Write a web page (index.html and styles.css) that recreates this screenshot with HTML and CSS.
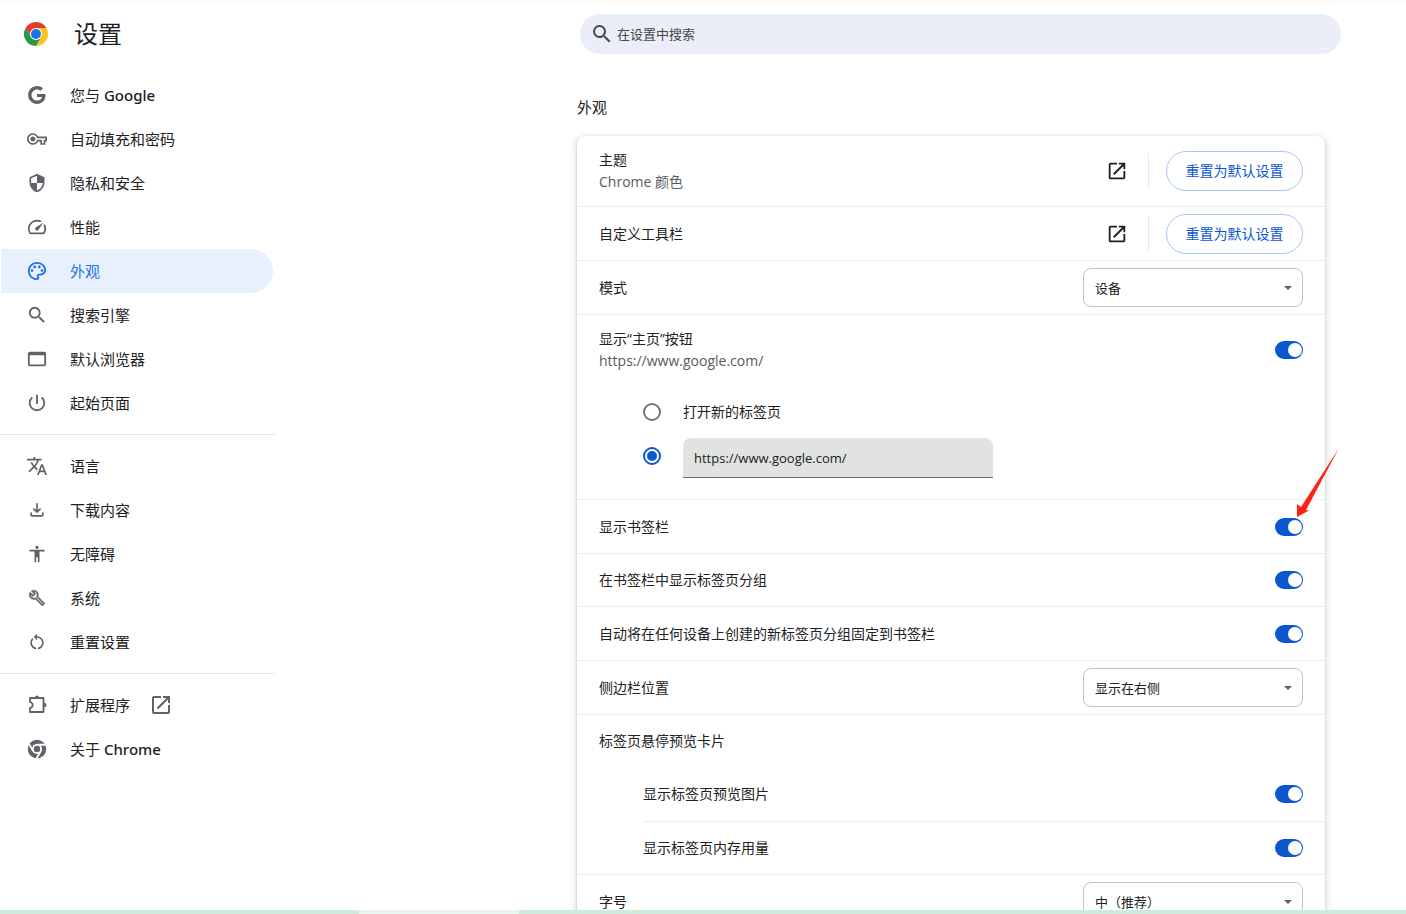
FILE: index.html
```html
<!DOCTYPE html>
<html lang="zh-CN">
<head>
<meta charset="utf-8">
<title>设置</title>
<link rel="stylesheet" href="styles.css">
</head>
<body>
<svg class="defs" aria-hidden="true">
  <symbol id="open" viewBox="0 0 24 24"><path d="M19 19H5V5h7V3H5a2 2 0 0 0-2 2v14a2 2 0 0 0 2 2h14c1.100 0 2-.9 2-2v-7h-2v7zM14 3v2h3.590l-9.830 9.830 1.410 1.410L19 6.410V10h2V3h-7z"/></symbol>
  <symbol id="search" viewBox="1 1 22 22"><path d="M15.500 14h-.79l-.28-.27A6.471 6.471 0 0 0 16 9.500 6.500 6.500 0 1 0 9.500 16c1.610 0 3.090-.59 4.230-1.570l.27.28v.79l5 4.990L20.490 19l-4.990-5zm-6 0C7.010 14 5 11.990 5 9.500S7.010 5 9.500 5 14 7.010 14 9.500 11.990 14 9.500 14z"/></symbol>
</svg>
<div class="strip-top"></div>
<div class="page">
  <header class="header">
    <div class="brand">
      <svg class="logo" viewBox="0 0 24 24" aria-hidden="true">
        <path fill="#e33b2e" d="M12 12V6h10.400A12 12 0 0 0 1.600 6L6.800 15z"/>
        <path fill="#fcc31e" d="M12 6h10.400A12 12 0 0 1 12 24l5.200-9z"/>
        <path fill="#279847" d="M12 24A12 12 0 0 1 1.600 6l5.200 9h10.400z"/>
        <circle cx="12" cy="12" r="6" fill="#fff"/>
        <circle cx="12" cy="12" r="5" fill="#1a73e8"/>
      </svg>
      <h1 class="title">设置</h1>
    </div>
    <label class="search">
      <svg class="icon22" aria-hidden="true"><use href="#search"/></svg>
      <input type="search" placeholder="在设置中搜索" aria-label="在设置中搜索">
    </label>
  </header>
  <div class="body">
    <nav class="nav" aria-label="设置">
      <a href="#google"><svg viewBox="0 0 18 18"><path d="M16.580 8H9v2.750h4.470c-.24 1.200-1.420 3.270-4.470 3.270-2.720 0-4.930-2.250-4.930-5.020S6.280 3.980 9 3.980c1.540 0 2.570.66 3.170 1.220l2.190-2.120C12.970 1.790 11.160 1 9 1 4.580 1 1 4.580 1 9s3.580 8 8 8c4.620 0 7.680-3.250 7.680-7.820 0-.46-.04-.83-.1-1.180z"/></svg><span>您与 <b>Google</b></span></a>
      <a href="#autofill"><svg viewBox="0 0 24 24"><path d="M22 19h-6v-4h-2.680c-1.140 2.420-3.600 4-6.320 4-3.860 0-7-3.140-7-7s3.140-7 7-7c2.720 0 5.170 1.580 6.320 4H24v6h-2v4zm-4-2h2v-4h2v-2H11.940l-.23-.67C11.010 8.340 9.110 7 7 7c-2.760 0-5 2.240-5 5s2.240 5 5 5c2.110 0 4.010-1.340 4.710-3.330l.23-.67H18v4zM7 15c-1.650 0-3-1.350-3-3s1.350-3 3-3 3 1.350 3 3-1.350 3-3 3z"/></svg><span>自动填充和密码</span></a>
      <a href="#privacy"><svg viewBox="0 0 24 24"><path d="M12 1L3 5v6c0 5.550 3.840 10.740 9 12 5.160-1.260 9-6.450 9-12V5l-9-4zm0 10.990h7c-.53 4.120-3.280 7.790-7 8.940V12H5V6.300l7-3.110v8.800z"/></svg><span>隐私和安全</span></a>
      <a href="#performance"><svg viewBox="1 1 22 22"><path d="M20.380 8.570l-1.230 1.850a8 8 0 0 1-.22 7.580H5.070A8 8 0 0 1 15.580 6.850l1.850-1.230A10 10 0 0 0 3.350 19a2 2 0 0 0 1.720 1h13.850a2 2 0 0 0 1.740-1 10 10 0 0 0-.27-10.440zm-9.790 6.840a2 2 0 0 0 2.830 0l5.660-8.490-8.490 5.660a2 2 0 0 0 0 2.830z"/></svg><span>性能</span></a>
      <a href="#appearance" class="active" aria-current="page"><svg viewBox="1 1 22 22"><path d="M12 22C6.490 22 2 17.510 2 12S6.490 2 12 2s10 4.040 10 9c0 3.310-2.690 6-6 6h-1.770c-.28 0-.5.22-.5.5 0 .12.05.23.13.33.41.47.64 1.060.64 1.670A2.500 2.500 0 0 1 12 22zm0-18c-4.410 0-8 3.590-8 8s3.590 8 8 8c.28 0 .5-.22.5-.5a.54.54 0 0 0-.14-.35c-.41-.46-.63-1.050-.63-1.650a2.500 2.500 0 0 1 2.500-2.500H16c2.210 0 4-1.790 4-4 0-3.860-3.590-7-8-7z"/><circle cx="6.500" cy="11.500" r="1.500"/><circle cx="9.500" cy="7.500" r="1.500"/><circle cx="14.500" cy="7.500" r="1.500"/><circle cx="17.500" cy="11.500" r="1.500"/></svg><span>外观</span></a>
      <a href="#engine"><svg><use href="#search"/></svg><span>搜索引擎</span></a>
      <a href="#browser"><svg viewBox="1 1 22 22"><path d="M20 4H4a2 2 0 0 0-2 2v12a2 2 0 0 0 2 2h16a2 2 0 0 0 2-2V6a2 2 0 0 0-2-2zm0 14H4V8h16v10z"/></svg><span>默认浏览器</span></a>
      <a href="#startup"><svg viewBox="1 1 22 22"><path d="M13 3h-2v10h2V3zm4.830 2.170l-1.420 1.420A6.920 6.920 0 0 1 19 12c0 3.870-3.130 7-7 7s-7-3.130-7-7c0-2.190 1.010-4.140 2.580-5.420L6.170 5.170A8.930 8.930 0 0 0 3 12a9 9 0 0 0 18 0c0-2.740-1.230-5.180-3.170-6.830z"/></svg><span>起始页面</span></a>
      <hr>
      <a href="#languages"><svg viewBox="1 1 22 22"><path d="M12.870 15.070l-2.540-2.510.03-.03c1.740-1.940 2.980-4.170 3.710-6.530H17V4h-7V2H8v2H1v1.990h11.170C11.500 7.920 10.440 9.750 9 11.350 8.070 10.320 7.300 9.190 6.690 8h-2c.73 1.630 1.730 3.170 2.980 4.560l-5.090 5.020L4 19l5-5 3.110 3.110.76-2.040zM18.500 10h-2L12 22h2l1.120-3h4.750L21 22h2l-4.500-12zm-2.620 7l1.620-4.330L19.120 17h-3.240z"/></svg><span>语言</span></a>
      <a href="#downloads"><svg viewBox="0 0 24 24"><path d="M12 16l-5-5 1.400-1.450 2.600 2.600V4h2v8.150l2.600-2.600L17 11zM6 20a2 2 0 0 1-2-2v-3h2v3h12v-3h2v3a2 2 0 0 1-2 2z"/></svg><span>下载内容</span></a>
      <a href="#accessibility"><svg viewBox="0 0 24 24"><path d="M12 2a2 2 0 1 1 0 4 2 2 0 0 1 0-4zm9 7h-6v13h-2v-6h-2v6H9V9H3V7h18v2z"/></svg><span>无障碍</span></a>
      <a href="#system"><svg viewBox="-2 -2 28 28"><path stroke="currentColor" stroke-width=".5" d="M22.610 18.990l-9.080-9.080c.93-2.340.45-5.100-1.440-7C9.790.61 6.210.4 3.660 2.260L7.500 6.110 6.080 7.520 2.250 3.690C.39 6.230.6 9.820 2.900 12.110c1.860 1.860 4.570 2.350 6.890 1.480l9.110 9.110c.39.39 1.020.39 1.410 0l2.300-2.300c.4-.38.4-1.010 0-1.410zm-3 1.600l-9.460-9.460c-.61.45-1.290.72-2 .82-1.360.2-2.790-.21-3.830-1.250C3.370 9.760 2.930 8.500 3 7.260l3.090 3.090 4.240-4.240-3.090-3.090c1.240-.07 2.490.37 3.440 1.310 1.080 1.080 1.490 2.570 1.240 3.960-.12.71-.42 1.370-.88 1.960l9.450 9.450-.88.89z"/></svg><span>系统</span></a>
      <a href="#reset"><svg viewBox="0 0 24 24"><path d="M12 5V2L8 6l4 4V7c3.310 0 6 2.690 6 6 0 2.970-2.170 5.430-5 5.910v2.020c3.950-.49 7-3.850 7-7.930 0-4.420-3.580-8-8-8zm-6 8c0-1.650.67-3.150 1.760-4.240L6.340 7.340A7.950 7.950 0 0 0 4 13c0 4.080 3.050 7.440 7 7.930v-2.020c-2.830-.48-5-2.940-5-5.910z"/></svg><span>重置设置</span></a>
      <hr>
      <a href="#extensions"><svg viewBox="0 0 20 20"><path fill="none" stroke="currentColor" stroke-width="1.800" stroke-linejoin="round" d="M3 3h13.500v14H3v-4c2-.6 2.700-1.500 2.700-3S5 7.600 3 7z"/><path d="M7.800 3a2.200 2.500 0 0 1 4.400 0zM17 7.700a2.500 2.300 0 0 1 0 4.600z"/></svg><span>扩展程序</span><svg class="external"><use href="#open"/></svg></a>
      <a href="#about"><svg viewBox="-1 -1 26 26"><circle cx="12" cy="12" r="12"/><circle cx="12" cy="12" r="6.600" fill="#fff"/><path stroke="#fff" stroke-width="2.400" d="M12 6.500h12M17 14.500L11.200 24.500M7.200 15L1.200 4.700"/><circle cx="12" cy="12" r="4.200"/></svg><span>关于 <b>Chrome</b></span></a>
    </nav>
    <main class="main">
      <h2 class="section-title">外观</h2>
      <section class="card">
        <div class="row tall">
          <div class="text"><span>主题</span><small>Chrome 颜色</small></div>
          <a class="open" href="#theme" aria-label="主题"><svg><use href="#open"/></svg></a>
          <div class="reset"><button type="button">重置为默认设置</button></div>
        </div>
        <div class="row">
          <div class="text">自定义工具栏</div>
          <a class="open" href="#toolbar" aria-label="自定义工具栏"><svg><use href="#open"/></svg></a>
          <div class="reset"><button type="button">重置为默认设置</button></div>
        </div>
        <div class="row">
          <label class="text" for="mode">模式</label>
          <div class="select"><select id="mode"><option>设备</option></select><svg viewBox="0 0 8 4"><path d="M0 0h8L4 4z"/></svg></div>
        </div>
        <div class="row tall">
          <label class="text" for="home"><span>显示“主页”按钮</span><small>https://www.google.com/</small></label>
          <input class="switch" id="home" type="checkbox" role="switch" checked>
        </div>
        <div class="choices">
          <label class="choice"><input type="radio" name="homepage"><span>打开新的标签页</span></label>
          <div class="choice"><input type="radio" name="homepage" aria-label="自定义网址" checked><input class="url" type="text" aria-label="自定义网址" value="https://www.google.com/"></div>
        </div>
        <div class="row pointed">
          <label class="text" for="bookmarks">显示书签栏</label>
          <input class="switch" id="bookmarks" type="checkbox" role="switch" checked>
          <svg class="arrow" viewBox="0 0 48 72" aria-hidden="true"><path fill="#ff2316" d="M46 1L13 63l3 .4L4 70 4 57l4 3z"/></svg>
        </div>
        <div class="row compact">
          <label class="text" for="groups">在书签栏中显示标签页分组</label>
          <input class="switch" id="groups" type="checkbox" role="switch" checked>
        </div>
        <div class="row">
          <label class="text" for="pin">自动将在任何设备上创建的新标签页分组固定到书签栏</label>
          <input class="switch" id="pin" type="checkbox" role="switch" checked>
        </div>
        <div class="row">
          <label class="text" for="side">侧边栏位置</label>
          <div class="select"><select id="side"><option>显示在右侧</option></select><svg viewBox="0 0 8 4"><path d="M0 0h8L4 4z"/></svg></div>
        </div>
        <div class="row compact"><div class="text">标签页悬停预览卡片</div></div>
        <div class="sub">
          <div class="row">
            <label class="text" for="images">显示标签页预览图片</label>
            <input class="switch" id="images" type="checkbox" role="switch" checked>
          </div>
          <div class="row compact">
            <label class="text" for="memory">显示标签页内存用量</label>
            <input class="switch" id="memory" type="checkbox" role="switch" checked>
          </div>
        </div>
        <div class="row">
          <label class="text" for="size">字号</label>
          <div class="select"><select id="size"><option>中（推荐）</option></select><svg viewBox="0 0 8 4"><path d="M0 0h8L4 4z"/></svg></div>
        </div>
      </section>
    </main>
  </div>
</div>
<div class="strip-bottom"><span></span></div>
</body>
</html>
```
FILE: styles.css
```css
* { box-sizing: border-box; }

body {
  margin: 0;
  height: 100vh;
  display: flex;
  flex-direction: column;
  overflow: hidden;
  background: #fff;
  color: #202124;
  font: 14px/22px "Open Sans", "Noto Sans CJK SC", sans-serif;
}

input, select, button { font: inherit; color: inherit; margin: 0; }
svg { flex: none; fill: currentColor; }
h1, h2 { margin: 0; font-weight: 400; }
.defs { position: absolute; width: 0; height: 0; }

.strip-top { flex: none; height: 3px; background: #fff8f3; }
.strip-bottom {
  flex: none;
  height: 4px;
  display: grid;
  grid-template-columns: 359px 160px 1fr;
  background: #cfe9da;
}
.strip-bottom span { grid-column: 2; background: #e9f6ef; }
.page { flex: 1; min-height: 0; overflow: hidden; }

.header { display: flex; align-items: center; height: 62px; padding-right: 65px; }
.brand {
  flex: none;
  width: 580px;
  display: flex;
  align-items: center;
  gap: 26px;
  padding-left: 24px;
}
.logo { width: 24px; height: 24px; }
.title { font-size: 24px; line-height: 32px; }
.search {
  flex: 1;
  display: flex;
  align-items: center;
  gap: 4px;
  height: 40px;
  padding: 0 11px;
  border-radius: 20px;
  background: #ebeef8;
  color: #474747;
}
.search input {
  flex: 1;
  min-width: 0;
  padding: 0;
  border: 0;
  outline: 0;
  background: none;
  font-size: 13px;
}
.search input::placeholder { color: #474747; opacity: 1; }
.icon22 { width: 22px; height: 22px; }

.body { display: flex; align-items: flex-start; }
.nav { flex: none; width: 275px; padding-top: 8px; }
.nav a {
  display: flex;
  align-items: center;
  gap: 23px;
  height: 44px;
  margin: 0 2px 0 1px;
  padding-left: 26px;
  border-radius: 0 22px 22px 0;
  color: #202124;
  font-size: 15px;
  text-decoration: none;
}
.nav b { font-family: "Noto Sans", "Open Sans", sans-serif; font-weight: 500; }
.nav svg { width: 20px; height: 20px; color: #5f6368; }
.nav .external { width: 24px; height: 24px; margin-left: -4px; }
.nav .active { background: #e8f0fe; color: #1a73e8; }
.nav .active svg { color: #1a73e8; }
.nav hr { height: 1px; margin: 9px 0; border: 0; background: #e6e6e6; }

.main { flex: 1; min-width: 0; padding: 0 81px 0 302px; }
.section-title { padding: 31px 0 18px; font-size: 15px; line-height: 22px; }
.card {
  border-radius: 8px;
  background: #fff;
  box-shadow: 0 1px 2px rgba(60, 64, 67, .3), 0 2px 6px 2px rgba(60, 64, 67, .15);
}
.row {
  display: flex;
  align-items: center;
  min-height: 54px;
  padding: 0 22px;
  border-top: 1px solid #ececec;
}
.row.compact { min-height: 53px; }
.row.tall { min-height: 71px; }
.row:first-child { border-top: 0; }
.card > .row:first-child { min-height: 70px; }
.text { flex: 1; display: flex; flex-direction: column; }
.text small { font-size: 14px; color: #5a5a5a; }

.open { display: flex; margin-right: 20px; color: #1f1f1f; }
.open svg { width: 22px; height: 22px; }
.reset {
  position: relative;
  padding-left: 18px;
}
.reset::before {
  content: "";
  position: absolute;
  left: 0;
  top: 2px;
  bottom: 2px;
  width: 1px;
  background: #e8e8e8;
}
.reset button {
  display: block;
  width: 137px;
  height: 40px;
  padding: 0;
  border: 1px solid #a8c7fa;
  border-radius: 20px;
  background: #fff;
  color: #0b57d0;
}

.select { display: grid; width: 220px; align-items: center; }
.select > * { grid-area: 1 / 1; }
.select select {
  appearance: none;
  width: 100%;
  height: 39px;
  padding: 0 11px;
  border: 1px solid #c4c4c4;
  border-radius: 8px;
  background: #fff;
  font-size: 13px;
}
.select svg {
  justify-self: end;
  width: 8px;
  height: 4px;
  margin-right: 11px;
  color: #5f6368;
  pointer-events: none;
}

.switch {
  appearance: none;
  flex: none;
  display: flex;
  justify-content: flex-end;
  width: 28px;
  height: 18px;
  padding: 2px 1px;
  border-radius: 9px;
  background: #0b57d0;
}
.switch::after {
  content: "";
  width: 14px;
  height: 14px;
  border-radius: 50%;
  background: #fff;
}

.choices { padding: 5px 22px 21px 66px; }
.choice { display: flex; align-items: center; gap: 22px; height: 44px; }
.choice input[type="radio"] {
  appearance: none;
  flex: none;
  width: 18px;
  height: 18px;
  border: 2px solid #757575;
  border-radius: 50%;
}
.choice input[type="radio"]:checked {
  border-color: #0b57d0;
  padding: 2px;
  background: #0b57d0 content-box;
}
.choice .url {
  align-self: flex-end;
  width: 310px;
  height: 40px;
  padding: 0 11px;
  border: 0;
  border-bottom: 1px solid #6b6f6d;
  border-radius: 8px 8px 0 0;
  background: #e1e3e1;
  font-size: 13px;
}
.pointed { position: relative; }
.arrow { position: absolute; right: -16px; top: -53px; width: 48px; height: 72px; }

.sub { padding-left: 66px; }
.sub .row { padding-left: 0; }
```
